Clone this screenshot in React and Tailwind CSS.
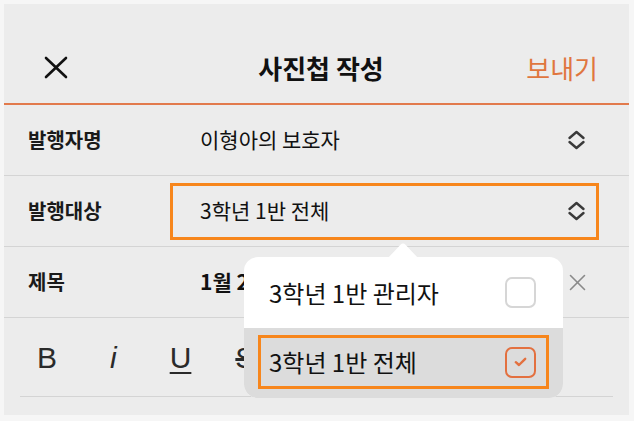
import React from "react";

const UpDown = () => (
  <svg width="19" height="20" viewBox="0 0 19 20" fill="none" stroke="#3a3a3a" strokeWidth="2.4" strokeLinecap="round" strokeLinejoin="round">
    <polyline points="2.5,8 9.5,2 16.5,8" />
    <polyline points="2.5,12 9.5,18 16.5,12" />
  </svg>
);

const SmallX = () => (
  <svg width="17" height="17" viewBox="0 0 17 17" fill="none" stroke="#8a8a8a" strokeWidth="1.6" strokeLinecap="round">
    <line x1="1.5" y1="1.5" x2="15.5" y2="15.5" />
    <line x1="15.5" y1="1.5" x2="1.5" y2="15.5" />
  </svg>
);

// one row of the form
const Row = ({ label, value, right, active, bold }) => (
  <div className="h-[71px] shrink-0 border-b border-[#d4d4d4] flex items-center pl-[24px]">
    <div className="w-[142px] text-[20px] font-bold text-[#1a1a1a]">{label}</div>
    <div
      className={
        active
          ? "w-[429px] h-[57px] border-[3px] border-[#f7861c] flex items-center justify-between pl-[27px] pr-[10px]"
          : "w-[429px] h-[57px] border-[3px] border-transparent flex items-center justify-between pl-[27px] pr-[10px]"
      }
    >
      <span className={bold ? "text-[21px] font-bold text-[#111]" : "text-[21px] text-[#111]"}>{value}</span>
      {right}
    </div>
  </div>
);

const Popover = () => (
  <div className="absolute left-[240px] top-[253px] w-[319px]">
    <svg className="absolute left-[144px] top-[-14px]" width="30" height="15" viewBox="0 0 30 15">
      <path d="M0 15 L12.5 1.8 Q15 -0.6 17.5 1.8 L30 15 Z" fill="#ffffff" />
    </svg>
    <div className="rounded-[14px] overflow-hidden bg-white">
      <div className="h-[71px] px-[14px] flex items-center">
        <div className="flex-1 h-[54px] border-[3px] border-transparent flex items-center justify-between pl-[8px] pr-[10px]">
          <span className="text-[24px] text-[#111]">3학년 1반 관리자</span>
          <div className="w-[31px] h-[31px] rounded-[7px] border-2 border-[#d6d6d6] bg-white" />
        </div>
      </div>
      <div className="h-[70px] bg-[#dcdcdc] px-[14px] pt-[7px]">
        <div className="h-[54px] border-[3px] border-[#f7861c] flex items-center justify-between pl-[8px] pr-[10px]">
          <span className="text-[24px] text-[#111]">3학년 1반 전체</span>
          <div className="w-[31px] h-[31px] rounded-[7px] border-[2.5px] border-[#e3703f] flex items-center justify-center">
            <svg width="13" height="10" viewBox="0 0 13 10" fill="none" stroke="#e3703f" strokeWidth="2.4" strokeLinecap="round" strokeLinejoin="round">
              <polyline points="1.8,5.2 5,8 11.2,1.8" />
            </svg>
          </div>
        </div>
      </div>
    </div>
  </div>
);

export default function App() {
  return (
    <div className="w-[634px] h-[421px] bg-[#f6f6f6] pt-[4px] pl-[4px] pr-[5px] pb-[6px] font-['Noto_Sans_CJK_KR','Noto_Sans',sans-serif]">
      <div className="relative h-full bg-[#ececec] flex flex-col">
        {/* header */}
        <div className="h-[101px] shrink-0 border-b-2 border-[#e27a4c] grid grid-cols-[1fr_auto_1fr] items-center pt-[27px] pl-[40px] pr-[31px]">
          <svg width="24" height="23" viewBox="0 0 24 23" fill="none" stroke="#111" strokeWidth="2.6" strokeLinecap="round">
            <line x1="2" y1="2" x2="22" y2="21" />
            <line x1="22" y1="2" x2="2" y2="21" />
          </svg>
          <div className="text-[26px] font-bold text-[#111]">사진첩 작성</div>
          <div className="justify-self-end text-[26px] text-[#e0763f]">보내기</div>
        </div>

        <Row label="발행자명" value="이형아의 보호자" right={<UpDown />} />
        <Row label="발행대상" value="3학년 1반 전체" right={<UpDown />} active />
        <Row label="제목" value="1월 25일 활동 사진" bold right={<SmallX />} />

        {/* editor toolbar */}
        <div className="h-[79px] shrink-0 mx-[16px] border-b border-[#d4d4d4] flex items-center text-[30px] text-[#2a2a2a] font-['Liberation_Sans',sans-serif]">
          <span className="ml-[17px]">B</span>
          <span className="ml-[53px] italic">i</span>
          <span className="ml-[53px] underline decoration-2 underline-offset-4">U</span>
          <span className="ml-[44px] line-through">S</span>
        </div>

        <Popover />
      </div>
    </div>
  );
}
